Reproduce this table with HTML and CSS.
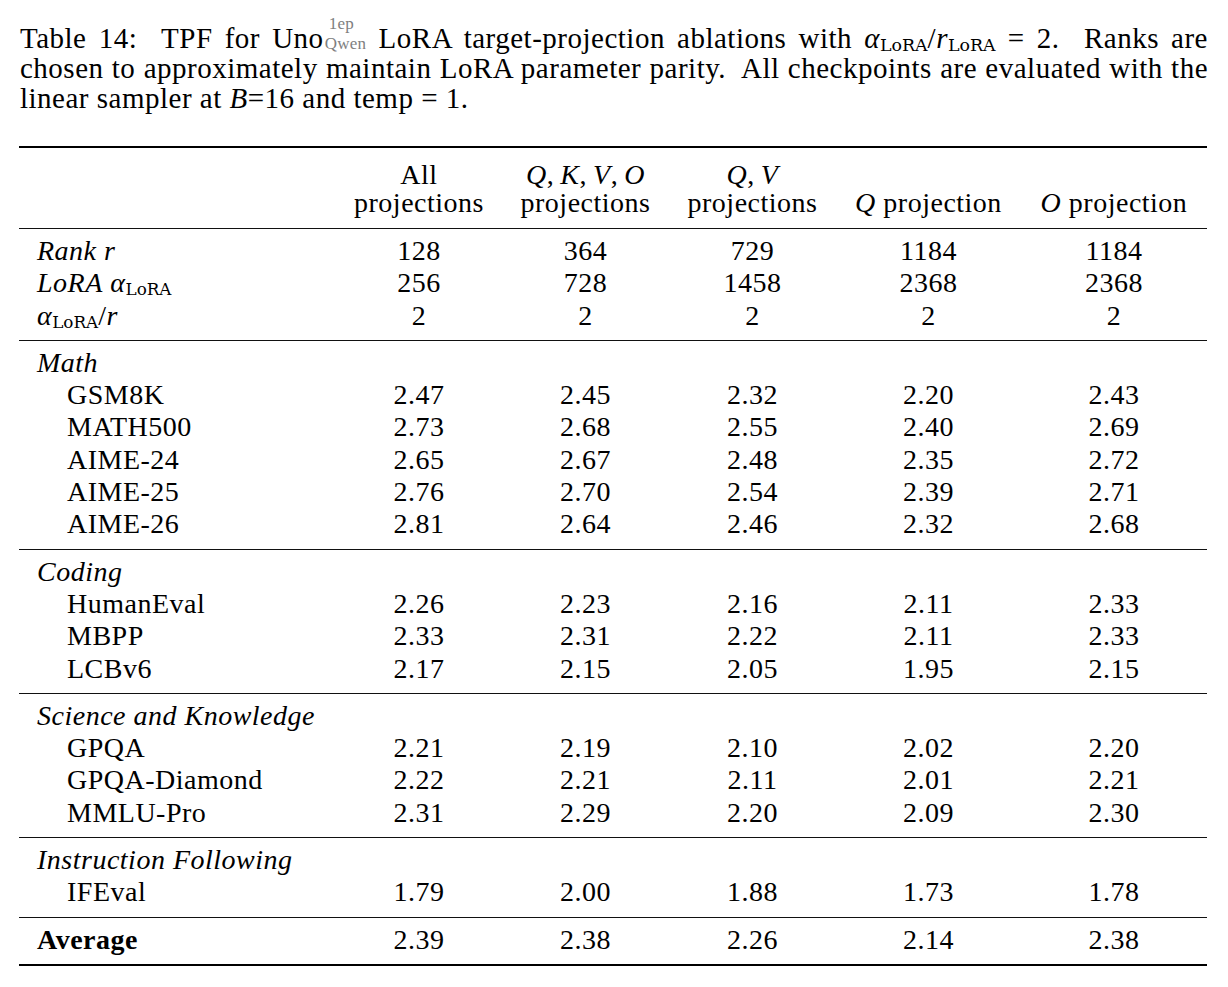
FILE: index.html
```html
<!DOCTYPE html>
<html lang="en">
<head>
    <meta charset="UTF-8">
    <title>Table 14 - LoRA target-projection ablations</title>
    <link rel="stylesheet" href="styles.css">
</head>
<body>
    <div class="page">
        <p class="caption">
            <span class="line">Table 14:&nbsp; TPF for Uno<span class="scripts"><span class="sup">1ep</span><span class="sub">Qwen</span></span> LoRA target-projection ablations with <span class="mi">α</span><sub class="rm">LoRA</sub>/<span class="mi">r</span><sub class="rm">LoRA</sub> = 2.&nbsp; Ranks are</span>
            <span class="line">chosen to approximately maintain LoRA parameter parity.&nbsp; All checkpoints are evaluated with the</span>
            <span class="line last">linear sampler at <span class="mi">B</span>=16 and temp = 1.</span>
        </p>

        <table class="results">
            <colgroup>
                <col class="c-label">
                <col class="c-a">
                <col class="c-b">
                <col class="c-c">
                <col class="c-d">
                <col class="c-e">
            </colgroup>
            <thead>
                <tr>
                    <th></th>
                    <th>All<br>projections</th>
                    <th><span class="mi">Q</span>,&thinsp;<span class="mi">K</span>,&thinsp;<span class="mi">V</span>,&thinsp;<span class="mi">O</span><br>projections</th>
                    <th><span class="mi">Q</span>,&thinsp;<span class="mi">V</span><br>projections</th>
                    <th><span class="mi">Q</span> projection</th>
                    <th><span class="mi">O</span> projection</th>
                </tr>
            </thead>
            <tbody>
                <tr><td class="group"><i>Rank</i> <span class="mi">r</span></td><td>128</td><td>364</td><td>729</td><td>1184</td><td>1184</td></tr>
                <tr><td class="group"><i>LoRA</i> <span class="mi">α</span><sub class="rm">LoRA</sub></td><td>256</td><td>728</td><td>1458</td><td>2368</td><td>2368</td></tr>
                <tr><td class="group"><span class="mi">α</span><sub class="rm">LoRA</sub>/<span class="mi">r</span></td><td>2</td><td>2</td><td>2</td><td>2</td><td>2</td></tr>
            </tbody>
            <tbody>
                <tr><td class="group"><i>Math</i></td><td></td><td></td><td></td><td></td><td></td></tr>
                <tr><td class="item">GSM8K</td><td>2.47</td><td>2.45</td><td>2.32</td><td>2.20</td><td>2.43</td></tr>
                <tr><td class="item">MATH500</td><td>2.73</td><td>2.68</td><td>2.55</td><td>2.40</td><td>2.69</td></tr>
                <tr><td class="item">AIME-24</td><td>2.65</td><td>2.67</td><td>2.48</td><td>2.35</td><td>2.72</td></tr>
                <tr><td class="item">AIME-25</td><td>2.76</td><td>2.70</td><td>2.54</td><td>2.39</td><td>2.71</td></tr>
                <tr><td class="item">AIME-26</td><td>2.81</td><td>2.64</td><td>2.46</td><td>2.32</td><td>2.68</td></tr>
            </tbody>
            <tbody>
                <tr><td class="group"><i>Coding</i></td><td></td><td></td><td></td><td></td><td></td></tr>
                <tr><td class="item">HumanEval</td><td>2.26</td><td>2.23</td><td>2.16</td><td>2.11</td><td>2.33</td></tr>
                <tr><td class="item">MBPP</td><td>2.33</td><td>2.31</td><td>2.22</td><td>2.11</td><td>2.33</td></tr>
                <tr><td class="item">LCBv6</td><td>2.17</td><td>2.15</td><td>2.05</td><td>1.95</td><td>2.15</td></tr>
            </tbody>
            <tbody>
                <tr><td class="group"><i>Science and Knowledge</i></td><td></td><td></td><td></td><td></td><td></td></tr>
                <tr><td class="item">GPQA</td><td>2.21</td><td>2.19</td><td>2.10</td><td>2.02</td><td>2.20</td></tr>
                <tr><td class="item">GPQA-Diamond</td><td>2.22</td><td>2.21</td><td>2.11</td><td>2.01</td><td>2.21</td></tr>
                <tr><td class="item">MMLU-Pro</td><td>2.31</td><td>2.29</td><td>2.20</td><td>2.09</td><td>2.30</td></tr>
            </tbody>
            <tbody>
                <tr><td class="group"><i>Instruction Following</i></td><td></td><td></td><td></td><td></td><td></td></tr>
                <tr><td class="item">IFEval</td><td>1.79</td><td>2.00</td><td>1.88</td><td>1.73</td><td>1.78</td></tr>
            </tbody>
            <tbody class="average">
                <tr><td class="group"><b>Average</b></td><td>2.39</td><td>2.38</td><td>2.26</td><td>2.14</td><td>2.38</td></tr>
            </tbody>
        </table>
    </div>
</body>
</html>
```

FILE: styles.css
```css
* {
    margin: 0;
    padding: 0;
    box-sizing: border-box;
}

body {
    background: #fff;
    color: #000;
    font-family: 'Liberation Serif', 'Times New Roman', serif;
}

.page {
    width: 1189px;
    margin-left: 19px;
}

/* caption: one block per printed line, stretched like the typeset original */
.caption {
    margin-top: 23px;
    padding-left: 1px;
    font-size: 29px;
    letter-spacing: 0.5px;
    line-height: 30px;
}

.caption .line {
    display: block;
    white-space: nowrap;
    text-align: justify;
    text-align-last: justify;
}

.caption .line.last {
    text-align-last: left;
}

.caption .scripts {
    display: inline-flex;
    flex-direction: column;
    vertical-align: top;
    margin: -9px 0 -1px 1px;
    color: #808080;
    font-size: 17px;
    letter-spacing: 0.3px;
    line-height: 20px;
}

.caption .sup {
    padding-left: 4px;
}

.mi {
    font-style: italic;
}

sub.rm {
    vertical-align: -0.2em;
    line-height: 0;
    font-family: 'DejaVu Serif', 'Liberation Serif', serif;
    font-size: 0.6em;
    letter-spacing: 0;
}

/* table */
.results {
    width: 1188px;
    border-collapse: collapse;
    table-layout: fixed;
    margin-top: 33px;
    border-top: 2px solid #000;
    border-bottom: 2px solid #000;
    font-size: 28px;
    letter-spacing: 0.5px;
}

.c-label { width: 317px; }
.c-a { width: 166px; }
.c-b { width: 167px; }
.c-c { width: 167px; }
.c-d { width: 185px; }
.c-e { width: 186px; }

.results th {
    font-weight: normal;
    line-height: 28px;
    padding: 13px 0 11px;
    vertical-align: bottom;
    text-align: center;
    white-space: nowrap;
}

.results thead tr {
    border-bottom: 1px solid #111;
}

.results tbody {
    border-top: 1px solid #111;
}

.results td {
    line-height: 32.3px;
    text-align: center;
    white-space: nowrap;
}

.results tbody tr:first-child td {
    padding-top: 6px;
}

.results tbody tr:last-child td {
    padding-bottom: 8px;
}

.results td.group {
    text-align: left;
    padding-left: 18px;
}

.results td.item {
    text-align: left;
    padding-left: 48px;
}
```
